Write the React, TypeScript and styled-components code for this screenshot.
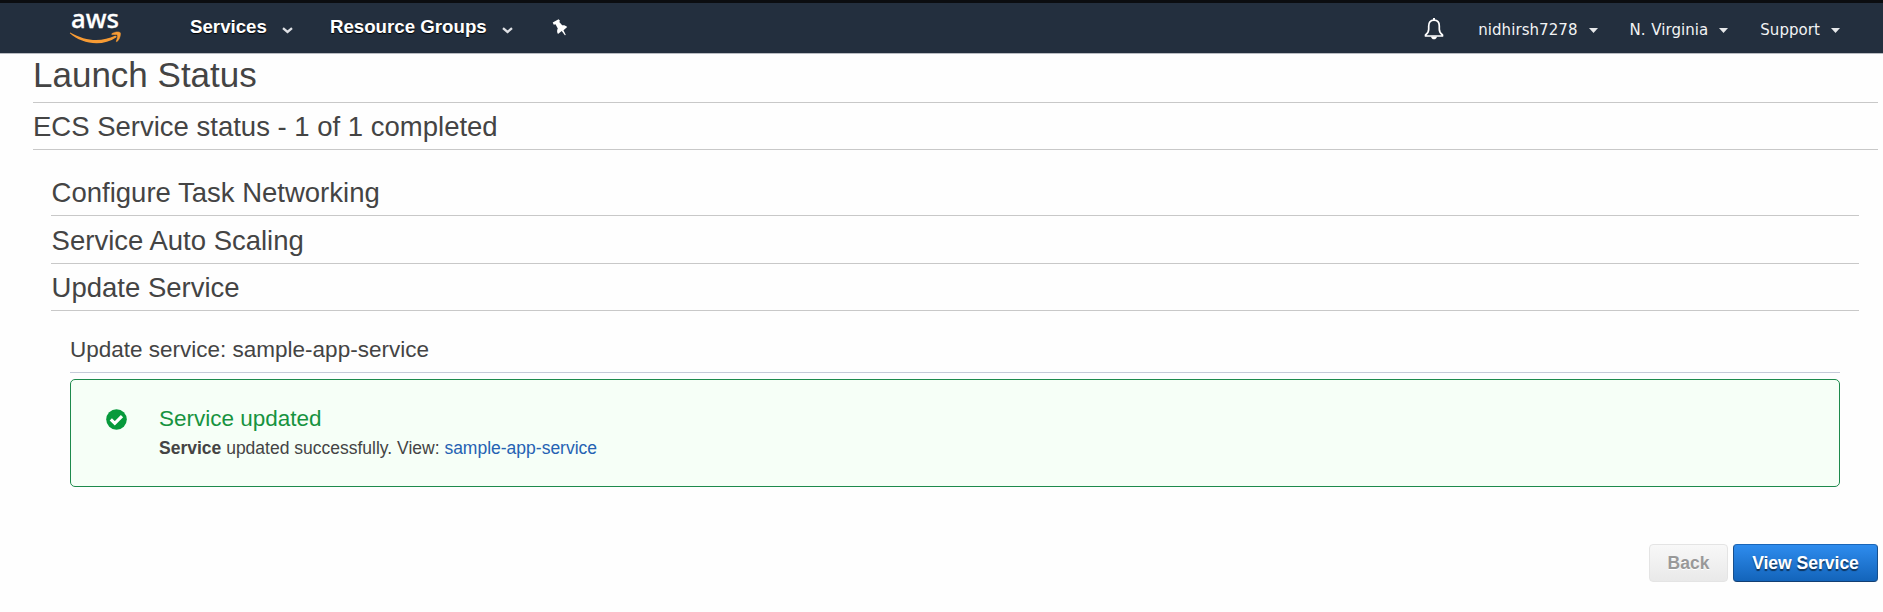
import React from 'react';
import styled, { createGlobalStyle } from 'styled-components';

const GlobalStyle = createGlobalStyle`
  * { box-sizing: border-box; }
  body {
    margin: 0;
    background: #fefefe;
    color: #444;
    font-family: "Liberation Sans", Arial, sans-serif;
    overflow: hidden;
  }
  h1, h2, h3, h4, p { margin: 0; font-weight: 400; }
`;

const Header = styled.header`
  display: flex;
  justify-content: space-between;
  height: 54px;
  padding: 0 43px 0 69px;
  background: #232f3e;
  border-top: 3px solid #0b0d10;
  border-bottom: 1px solid #b9bcc2;
`;

const NavGroup = styled.nav`
  display: flex;
  align-items: flex-start;
`;

const Logo = styled.svg`
  width: 54px;
  height: 44px;
  margin-right: 67px;
  overflow: visible;
`;

const NavItem = styled.a<{ $gap: number }>`
  display: flex;
  align-items: center;
  margin-right: ${(p) => p.$gap}px;
  color: #fff;
  font-size: 18.7px;
  font-weight: 700;
  line-height: 48px;
  text-shadow: 0 1px 1px #000;
  white-space: nowrap;

  svg {
    width: 11px;
    height: 7px;
    margin: 6px 0 0 15px;
  }
`;

const PinIcon = styled.svg`
  width: 16px;
  height: 18px;
  margin-top: 16px;
`;

const BellIcon = styled.svg`
  width: 20px;
  height: 22px;
  margin: 15px 34px 0 0;
`;

const AccountItem = styled.a<{ $gap?: number }>`
  display: flex;
  align-items: center;
  margin-right: ${(p) => p.$gap ?? 0}px;
  color: #f2f3f4;
  font-family: "DejaVu Sans", Verdana, sans-serif;
  font-size: 15px;
  letter-spacing: 0.06px;
  word-spacing: 0.8px;
  line-height: 54px;
  white-space: nowrap;

  svg {
    width: 9px;
    height: 5px;
    margin-left: 11px;
  }
`;

const Page = styled.main`
  padding: 0 5px 0 33px;
`;

const Title = styled.h1`
  height: 49px;
  border-bottom: 1px solid #c8c8c8;
  font-size: 35px;
  line-height: 42px;
`;

const Heading = styled.h2<{ $height?: number }>`
  display: flex;
  align-items: flex-end;
  height: ${(p) => p.$height ?? 47}px;
  border-bottom: 1px solid #c8c8c8;
  font-size: 27.5px;
  line-height: 45px;
`;

const Steps = styled.section`
  padding: 19px 19px 0 18px;

  > ${Heading} {
    text-indent: 0.6px;
  }
`;

const StepDetail = styled.section`
  padding: 24px 19px 0;
`;

const DetailHeading = styled.h3`
  height: 38px;
  border-bottom: 1px solid #c5cad8;
  font-size: 22.5px;
  line-height: 30px;
`;

const Alert = styled.div`
  display: flex;
  height: 108px;
  margin-top: 6px;
  padding: 25px 35px;
  border: 1px solid #1d8a4c;
  border-radius: 5px;
  background: #f6fff7;
`;

const CheckIcon = styled.svg`
  width: 21px;
  height: 21px;
  margin: 4px 32px 0 0;
`;

const AlertTitle = styled.h4`
  color: #169340;
  font-size: 22.5px;
  line-height: 28px;
`;

const AlertText = styled.p`
  font-size: 17.5px;
  line-height: 30px;
`;

const Link = styled.a`
  color: #2562b3;
`;

const Actions = styled.footer`
  display: flex;
  justify-content: flex-end;
  gap: 5px;
  margin-top: 57px;
`;

const Button = styled.button<{ $primary?: boolean }>`
  width: ${(p) => (p.$primary ? 145 : 79)}px;
  height: 38px;
  padding: 1px 0 0;
  border: 1px solid;
  border-color: ${(p) => (p.$primary ? '#1a66b8 #174f8c #123f73' : '#e4e4e4')};
  border-radius: 4px;
  background: ${(p) =>
    p.$primary ? 'linear-gradient(#2e8cee, #1364ba)' : 'linear-gradient(#f8f8f8, #e9e9e9)'};
  color: ${(p) => (p.$primary ? '#fff' : '#999')};
  text-shadow: ${(p) => (p.$primary ? '0 2px 1px rgba(0, 0, 0, 0.55)' : '0 1px 0 #fff')};
  font: 700 17.5px "Liberation Sans", Arial, sans-serif;
  white-space: nowrap;
`;

const Chevron = () => (
  <svg viewBox="0 0 11 7">
    <path d="M1 1.2 5.5 5 10 1.2" fill="none" stroke="#dfe1e5" strokeWidth="2.300" />
  </svg>
);

const Caret = () => (
  <svg viewBox="0 0 9 5">
    <path d="M0 0h9L4.5 5z" fill="#e6e8ea" />
  </svg>
);

export default function App() {
  return (
    <>
      <GlobalStyle />
      <Header>
        <NavGroup>
          <Logo viewBox="0 0 54 44">
            <text
              x="2"
              y="25"
              fill="#fff"
              fontFamily="'Noto Sans', sans-serif"
              fontSize="26"
              fontWeight="500"
              stroke="#fff"
              strokeWidth="0.3"
              textLength="48"
              lengthAdjust="spacingAndGlyphs"
            >
              aws
            </text>
            <path
              d="M1.200 29.500C10 34.600 19 37 27 37c7 0 13.500-1.700 19-4.200 1.200-.5 2.200.8 1.100 1.700C41.700 38.300 34.500 40.300 27.500 40.300 17.500 40.300 8 36.600.8 30.300z"
              fill="#f79b34"
            />
            <path
              d="M43 30.600c3-2 7.200-2 8.200-.9.700 1.200-.2 6.200-3 8.700-.6.5-1 .2-.8-.4.8-2 1.700-5 1-5.900-.8-.9-3.500-.6-5-.5-.8.100-.9-.6-.4-1z"
              fill="#f79b34"
              stroke="#f79b34"
              strokeWidth="0.600"
            />
          </Logo>
          <NavItem $gap={37}>
            Services
            <Chevron />
          </NavItem>
          <NavItem $gap={39}>
            Resource Groups
            <Chevron />
          </NavItem>
          <PinIcon viewBox="0 0 16 18">
            <path
              d="M.7 3.600 6.600.2l1.400 1.500-.7 1.300 2.900 3.300c1.800-.3 3.600.2 5 1.700l-3.700 3.200 2.300 4.700-.9.400-3.200-4.200-3.700 3c-1.100-1.900-1.200-3.900-.2-5.600L3.500 5.300l-1.700.4z"
              fill="#fff"
            />
          </PinIcon>
        </NavGroup>
        <NavGroup>
          <BellIcon viewBox="0 0 20 22">
            <path
              d="M10 2.200C6.300 2.200 4.700 4.800 4.700 8v3.200c0 2.300-1 4.200-3.200 5.800v1h17v-1c-2.200-1.600-3.200-3.500-3.200-5.800V8c0-3.200-1.600-5.800-5.300-5.800z"
              fill="none"
              stroke="#fff"
              strokeWidth="1.700"
              strokeLinejoin="round"
            />
            <path d="M9 0h2v2.500H9zM7 18.500h6c-.3 1.900-1.400 2.800-3 2.800s-2.700-.9-3-2.800z" fill="#fff" />
          </BellIcon>
          <AccountItem $gap={32}>
            nidhirsh7278
            <Caret />
          </AccountItem>
          <AccountItem $gap={32}>
            N. Virginia
            <Caret />
          </AccountItem>
          <AccountItem>
            Support
            <Caret />
          </AccountItem>
        </NavGroup>
      </Header>
      <Page>
        <Title>Launch Status</Title>
        <Heading>ECS Service status - 1 of 1 completed</Heading>
        <Steps>
          <Heading>Configure Task Networking</Heading>
          <Heading $height={48}>Service Auto Scaling</Heading>
          <Heading>Update Service</Heading>
          <StepDetail>
            <DetailHeading>Update service: sample-app-service</DetailHeading>
            <Alert>
              <CheckIcon viewBox="0 0 21 21">
                <circle cx="10.500" cy="10.500" r="10.300" fill="#079a3c" />
                <path d="m4.800 10.300 4 4 7.200-7.200" fill="none" stroke="#fff" strokeWidth="3.200" />
              </CheckIcon>
              <div>
                <AlertTitle>Service updated</AlertTitle>
                <AlertText>
                  <b>Service</b> updated successfully. View: <Link>sample-app-service</Link>
                </AlertText>
              </div>
            </Alert>
          </StepDetail>
        </Steps>
        <Actions>
          <Button>Back</Button>
          <Button $primary>View Service</Button>
        </Actions>
      </Page>
    </>
  );
}
